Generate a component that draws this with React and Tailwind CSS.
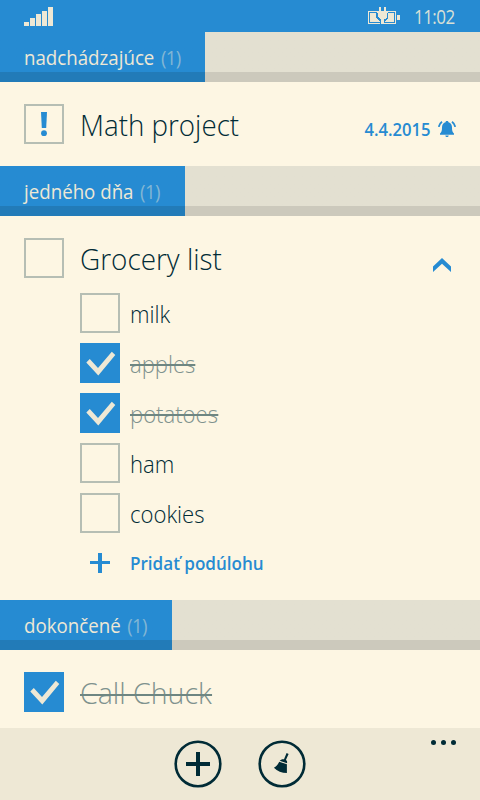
function Check() {
  return (
    <svg viewBox="0 0 40 40" className="size-10 shrink-0 bg-[#268bd2]">
      <path d="M6.300 19.400 9.800 16 18 24.900 31.800 8.800 35.300 12 18.300 32.600Z" fill="#eee8d5" />
    </svg>
  )
}

function Box({ children }) {
  return (
    <div className="flex size-10 shrink-0 items-center justify-center border-2 border-[#b6beb4]">
      {children}
    </div>
  )
}

function SectionHeader({ title, width }) {
  return (
    <div className="h-[50px] bg-gradient-to-b from-[#e3e0d1] from-80% to-[#ccc9bc] to-80%">
      <div
        className={`flex h-full items-center bg-gradient-to-b from-[#268bd2] from-80% to-[#227bb8] to-80% pt-px pl-6 ${width}`}
      >
        <div className="origin-left scale-x-[0.935] text-[20px] whitespace-pre text-[#eee8d5]">
          <span>{title}</span>
          <span className="ml-[7px] tracking-[-0.7px] text-[#82b6d4]">(1)</span>
        </div>
      </div>
    </div>
  )
}

function SubTask({ label, done }) {
  return (
    <div className="flex h-10 items-center gap-2.5">
      {done ? <Check /> : <Box />}
      <span
        className={`relative top-px origin-left scale-x-[0.92] text-[24px] font-light whitespace-pre ${
          done ? 'text-[#7f928e]' : 'text-[#002b36]'
        }`}
      >
        {label}
        {done && <i className="absolute top-[18px] left-0 h-0.5 w-full bg-[#6e8682]" />}
      </span>
    </div>
  )
}

export default function App() {
  return (
    <div className="flex h-[800px] w-[480px] flex-col overflow-hidden bg-[#fdf6e3] font-['Open_Sans',sans-serif] text-[#002b36]">
      <header className="flex h-8 shrink-0 items-center bg-[#268bd2] text-[#eee8d5]">
        <svg width="30" height="32" className="ml-6" fill="#eee8d5" shapeRendering="crispEdges">
          <path d="M0 22h5v4H0zM6 18h5v8H6zM12 14h5v12h-5zM18 11h5v15h-5zM24 7h5v19h-5z" />
        </svg>
        <svg width="33" height="32" className="ml-[314px]" fill="#eee8d5" shapeRendering="crispEdges">
          <path d="M0 11h9v1H1v11h11v1H0zM19 11h9v13H16v-1h11V12h-8zM29 15h3v5h-3z" />
          <path d="M2 13h6v5l4 3v1H2zM20 13h6v9h-9v-1l3-3zM11 7h2v4h3V7h2v4h2v2h-1v4l-2 2h-1v5h-3v-5h-1l-2-2v-4H9v-2h2z" />
        </svg>
        <span className="ml-[13px] origin-left scale-x-[0.87] pt-px text-[19.500px] tracking-[-0.6px] text-[#d9e0d6]">
          11:02
        </span>
      </header>

      <SectionHeader title="nadchádzajúce" width="w-[205px]" />
      <div className="flex h-[84px] shrink-0 items-center px-6">
        <Box>
          <svg width="8" height="26" fill="#268bd2">
            <path d="M1 1h6L6.200 17H1.800z" />
            <circle cx="4" cy="22.200" r="2.900" />
          </svg>
        </Box>
        <span className="ml-4 origin-left scale-x-[0.925] text-[30px] font-light">Math project</span>
        <div className="ml-auto flex items-center gap-1.5 pt-2.5 text-[#268bd2]">
          <span className="mr-px origin-right scale-x-[0.95] text-[17.500px] font-semibold">4.4.2015</span>
          <svg width="18" height="18" viewBox="0 0 18 18" fill="#268bd2">
            <path d="M9 1c.9 0 1.400.5 1.500 1.200C13 3 14 5 14 7.500c0 3.500.5 4.500 2 6V14.700H2v-1.200c1.500-1.500 2-2.500 2-6C4 5 5 3 7.500 2.200 7.600 1.500 8.100 1 9 1zM7.300 15.600h3.400c-.2 1-.8 1.500-1.700 1.500s-1.500-.5-1.700-1.500z" />
            <path d="M4 1.700C2.200 3 1.200 4.600.8 6.900M14 1.700c1.800 1.300 2.800 2.900 3.200 5.200" fill="none" stroke="#268bd2" strokeWidth="1.8" />
          </svg>
        </div>
      </div>

      <SectionHeader title="jedného dňa" width="w-[185px]" />
      <div className="h-[384px] shrink-0 pt-[22px]">
        <div className="flex h-10 items-center px-6">
          <Box />
          <span className="ml-4 origin-left scale-x-[0.93] text-[30px] font-light">Grocery list</span>
          <svg width="18" height="15" className="mt-3.5 mr-[5px] ml-auto" fill="#268bd2">
            <path d="M0 8.500 9 0l9 8.500V14L9 5.800 0 14z" />
          </svg>
        </div>
        <div className="mt-[15px] ml-20 flex flex-col gap-2.5">
          <SubTask label="milk" />
          <SubTask label="apples" done />
          <SubTask label="potatoes" done />
          <SubTask label="ham" />
          <SubTask label="cookies" />
          <div className="flex h-10 items-center gap-2.5 text-[#268bd2]">
            <svg width="40" height="40" fill="#268bd2" shapeRendering="crispEdges">
              <path d="M18 10h4v8h8v3h-8v9h-4v-9h-8v-3h8z" />
            </svg>
            <span className="origin-left scale-x-[0.948] pt-px text-[18px] font-semibold">Pridať podúlohu</span>
          </div>
        </div>
      </div>

      <SectionHeader title="dokončené" width="w-[172px]" />
      <div className="flex h-[78px] shrink-0 items-center px-6 pt-1.5">
        <Check />
        <span className="relative ml-4 origin-left scale-x-[0.95] text-[30px] font-light text-[#7f928e]">
          Call Chuck
          <i className="absolute top-6 left-0 h-0.5 w-full bg-[#6e8682]" />
        </span>
      </div>

      <footer className="flex h-[72px] shrink-0 bg-[#eee8d5]">
        <svg width="48" height="48" className="mt-3 ml-[174px]" fill="#002b36">
          <circle cx="24" cy="24" r="22.300" fill="none" stroke="#002b36" strokeWidth="2.600" />
          <path d="M22 12h4v10h10v4H26v10h-4V26H12v-4h10z" />
        </svg>
        <svg width="48" height="48" className="mt-3 ml-9" fill="#002b36">
          <circle cx="24" cy="24" r="22.300" fill="none" stroke="#002b36" strokeWidth="2.600" />
          <path d="m28.600 13 2 1-2.700 6c1.200.6 1.400 1.700 1.100 3.300l-7.300-2.500c1-1.400 2.700-1.800 4.300-1.500zM21.200 21.700l7.700 2.600v8.700c-5 0-9.700-1.700-13-5.300 2.300-1.200 3.900-3 5.300-6z" />
        </svg>
        <svg width="26" height="6" className="mt-[11px] ml-[125px]" fill="#002b36">
          <circle cx="2.500" cy="3.500" r="2.500" />
          <circle cx="12.500" cy="3.500" r="2.500" />
          <circle cx="22.500" cy="3.500" r="2.500" />
        </svg>
      </footer>
    </div>
  )
}
